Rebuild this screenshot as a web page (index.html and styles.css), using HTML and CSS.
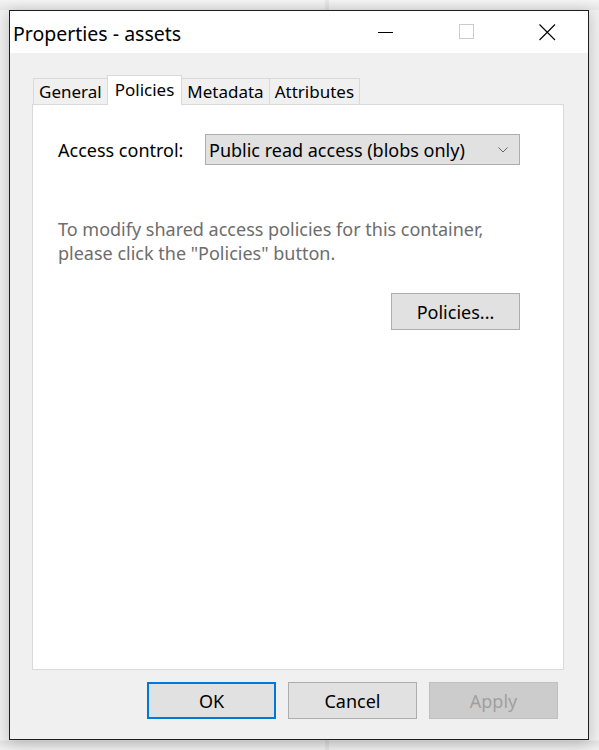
FILE: index.html
```html
<!DOCTYPE html>
<html>
<head>
<meta charset="utf-8">
<link rel="stylesheet" href="styles.css">
</head>
<body>
<div class="window">
  <div class="titlebar">
    <span class="title">Properties - assets</span>
    <div class="controls">
      <span class="ctl"><svg width="16" height="16" viewBox="0 0 16 16"><line x1="0" y1="8.5" x2="15" y2="8.5" stroke="#000" stroke-width="1"/></svg></span>
      <span class="ctl"><svg width="16" height="16" viewBox="0 0 16 16"><rect x="0.5" y="0.5" width="14" height="14" fill="none" stroke="#cccccc" stroke-width="1"/></svg></span>
      <span class="ctl"><svg width="17" height="17" viewBox="0 0 17 17"><path d="M0.5 0.5 L16 16 M16 0.5 L0.5 16" stroke="#000" stroke-width="1.1" fill="none"/></svg></span>
    </div>
  </div>
  <div class="client">
    <div class="tabs">
      <div class="tab">General</div>
      <div class="tab active">Policies</div>
      <div class="tab">Metadata</div>
      <div class="tab">Attributes</div>
    </div>
    <div class="panel">
      <div class="row">
        <span class="label">Access control:</span>
        <div class="select">
          <span>Public read access (blobs only)</span>
          <svg class="chev" width="10" height="6" viewBox="0 0 10 6"><path d="M0.5 0.5 L5 5 L9.5 0.5" fill="none" stroke="#666" stroke-width="1"/></svg>
        </div>
      </div>
      <p class="hint">To modify shared access policies for this container,<br>please click the "Policies" button.</p>
      <div class="btnrow"><button class="btn">Policies...</button></div>
    </div>
    <div class="footer">
      <button class="btn default">OK</button>
      <button class="btn">Cancel</button>
      <button class="btn disabled">Apply</button>
    </div>
  </div>
</div>
</body>
</html>
```
FILE: styles.css
```css
html, body {
  margin: 0;
  padding: 0;
}
body {
  width: 599px;
  height: 750px;
  overflow: hidden;
  font-family: "Noto Sans", "Open Sans", sans-serif;
  font-size: 18px;
  color: #000;
  background:
    linear-gradient(to right, transparent 325px, rgba(0,0,0,0.05) 325px, rgba(0,0,0,0.05) 329px, transparent 329px),
    linear-gradient(to bottom, #f4f4f4 0, #e6e6e6 10px, #f0f0f0 10px, #f0f0f0 740px, #e2e2e2 741px, #f0f0f0 750px);
  padding: 10px 0 0 9px;
  box-sizing: border-box;
}
.window {
  width: 580px;
  height: 730px;
  box-sizing: border-box;
  border: 1px solid #1e1e1e;
  background: #f0f0f0;
  box-shadow: 0 3px 14px rgba(0,0,0,0.22);
  display: flex;
  flex-direction: column;
}
.titlebar {
  height: 42px;
  background: #fff;
  display: flex;
  align-items: center;
  justify-content: space-between;
  flex: none;
}
.title {
  font-size: 19.5px;
  padding-left: 3px;
  padding-top: 2px;
}
.controls {
  display: flex;
  align-items: center;
  height: 100%;
}
.ctl {
  width: 81px;
  display: flex;
  align-items: center;
  justify-content: center;
}
.ctl svg { display: block; }
.client {
  flex: 1;
  display: flex;
  flex-direction: column;
  padding: 22px 24px 0 22px;
}
.tabs {
  display: flex;
  align-items: flex-end;
  height: 29px;
  padding-left: 1px;
  position: relative;
  z-index: 1;
  font-size: 17px;
}
.tab {
  height: 26px;
  box-sizing: border-box;
  border: 1px solid #d9d9d9;
  border-bottom: none;
  padding: 0 5px;
  line-height: 26px;
  background: #f0f0f0;
  margin-right: -1px;
}
.tab.active {
  height: 30px;
  background: #fff;
  line-height: 28px;
  margin-bottom: -1px;
  position: relative;
  padding: 0 7px;
}
.panel {
  height: 566px;
  box-sizing: border-box;
  background: #fff;
  border: 1px solid #d9d9d9;
  padding: 29px 43px 0 25px;
}
.row {
  display: flex;
  align-items: center;
}
.label {
  width: 147px;
}
.select {
  flex: 1;
  height: 31px;
  box-sizing: border-box;
  background: #e1e1e1;
  border: 1px solid #adadad;
  display: flex;
  align-items: center;
  justify-content: space-between;
  padding: 0 11px 0 3px;
}
.chev { display: block; }
.hint {
  margin: 52px 0 0 0;
  color: #6d6d6d;
  line-height: 24px;
}
.btnrow {
  display: flex;
  justify-content: flex-end;
  margin-top: 28px;
}
.btn {
  font-family: inherit;
  font-size: 18px;
  width: 129px;
  height: 37px;
  box-sizing: border-box;
  background: #e1e1e1;
  border: 1px solid #adadad;
  color: #000;
  padding: 0;
  margin: 0;
}
.footer {
  display: flex;
  justify-content: flex-end;
  gap: 12px;
  padding: 12px 6px 0 0;
}
.btn.default {
  border: 2px solid #0078d7;
}
.btn.disabled {
  background: #cccccc;
  border-color: #bfbfbf;
  color: #a0a0a0;
}
```
